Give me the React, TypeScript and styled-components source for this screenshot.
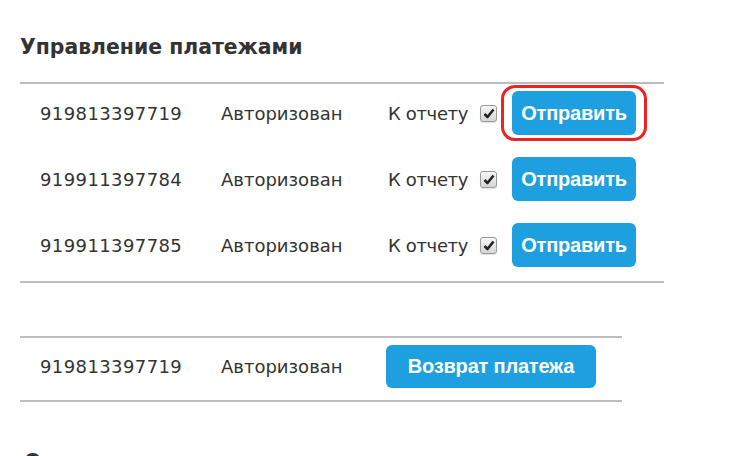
import React from "react";
import styled, { createGlobalStyle } from "styled-components";

const Global = createGlobalStyle`
  html, body { margin: 0; padding: 0; background: #fff; }
  body { width: 750px; height: 456px; overflow: hidden; font-family: "DejaVu Sans", "Liberation Sans", sans-serif; color: #333; }
`;

const Page = styled.div`
  padding: 33px 0 0 20px;
`;

const Heading = styled.h2`
  margin: 0;
  height: 49px;
  font-size: 20.4px;
  font-weight: bold;
  line-height: 28px;
  color: #333;
`;

const Table = styled.div<{ $width: number; $pt: number; $pb: number; $gap: number }>`
  width: ${(p) => p.$width}px;
  border-top: 2px solid #bdbdbd;
  border-bottom: 2px solid #bdbdbd;
  padding: ${(p) => p.$pt}px 0 ${(p) => p.$pb}px;
  display: flex;
  flex-direction: column;
  gap: ${(p) => p.$gap}px;
`;

const Row = styled.div`
  display: flex;
  align-items: center;
  height: 44px;
  padding-left: 20px;
`;

const Cell = styled.span<{ $w: number; $ls?: number }>`
  width: ${(p) => p.$w}px;
  font-size: 18px;
  letter-spacing: ${(p) => p.$ls ?? 0}px;
  color: #333;
  white-space: nowrap;
`;

const Report = styled.label`
  display: flex;
  align-items: center;
  font-size: 18px;
  letter-spacing: -0.35px;
  color: #333;
  gap: 12px;
  margin-right: 15px;
`;

const Check = styled.span`
  box-sizing: border-box;
  width: 17px;
  height: 17px;
  border: 1px solid #9a9a9a;
  border-radius: 3px;
  background: linear-gradient(#f6f6f6, #d6d6d6);
  display: flex;
  align-items: center;
  justify-content: center;
  box-shadow: 0 1px 1px rgba(0, 0, 0, 0.12);
`;

const Button = styled.button<{ $w: number; $h: number }>`
  width: ${(p) => p.$w}px;
  height: ${(p) => p.$h}px;
  border: none;
  border-radius: 6px;
  background: #1d9fe0;
  color: #fff;
  font-family: "Liberation Sans", Arial, sans-serif;
  font-weight: bold;
  font-size: 20px;
  letter-spacing: -0.2px;
  padding: 0;
  cursor: pointer;
`;

const Highlight = styled.span`
  position: relative;
  display: inline-flex;
  &::after {
    content: "";
    position: absolute;
    top: -6px;
    bottom: -6px;
    left: -11px;
    right: -11px;
    border: 3px solid #ec2320;
    border-radius: 14px;
    pointer-events: none;
  }
`;

const Spacer = styled.div`
  height: 53px;
`;

const NextHeading = styled(Heading)`
  margin-top: 46px;
  padding-left: 4px;
`;

const CheckMark = () => (
  <Check>
    <svg width="12" height="11" viewBox="0 0 12 11">
      <path d="M1.5 6 L4.5 9 L10.5 1.5" fill="none" stroke="#222" strokeWidth="2.6" strokeLinejoin="round" />
    </svg>
  </Check>
);

const rows = ["919813397719", "919911397784", "919911397785"];

export default function App() {
  return (
    <>
      <Global />
      <Page>
        <Heading>Управление платежами</Heading>
        <Table $width={644} $pt={7} $pb={14} $gap={22}>
          {rows.map((id, i) => {
            const btn = (
              <Button $w={124} $h={44}>
                Отправить
              </Button>
            );
            return (
              <Row key={id}>
                <Cell $w={181} $ls={0.4}>{id}</Cell>
                <Cell $w={167}>Авторизован</Cell>
                <Report>
                  К отчету
                  <CheckMark />
                </Report>
                {i === 0 ? <Highlight>{btn}</Highlight> : btn}
              </Row>
            );
          })}
        </Table>
        <Spacer />
        <Table $width={602} $pt={6} $pb={12} $gap={0}>
          <Row>
            <Cell $w={181} $ls={0.4}>919813397719</Cell>
            <Cell $w={165}>Авторизован</Cell>
            <Button $w={210} $h={43}>
              Возврат платежа
            </Button>
          </Row>
        </Table>
        <NextHeading>Отчеты</NextHeading>
      </Page>
    </>
  );
}
